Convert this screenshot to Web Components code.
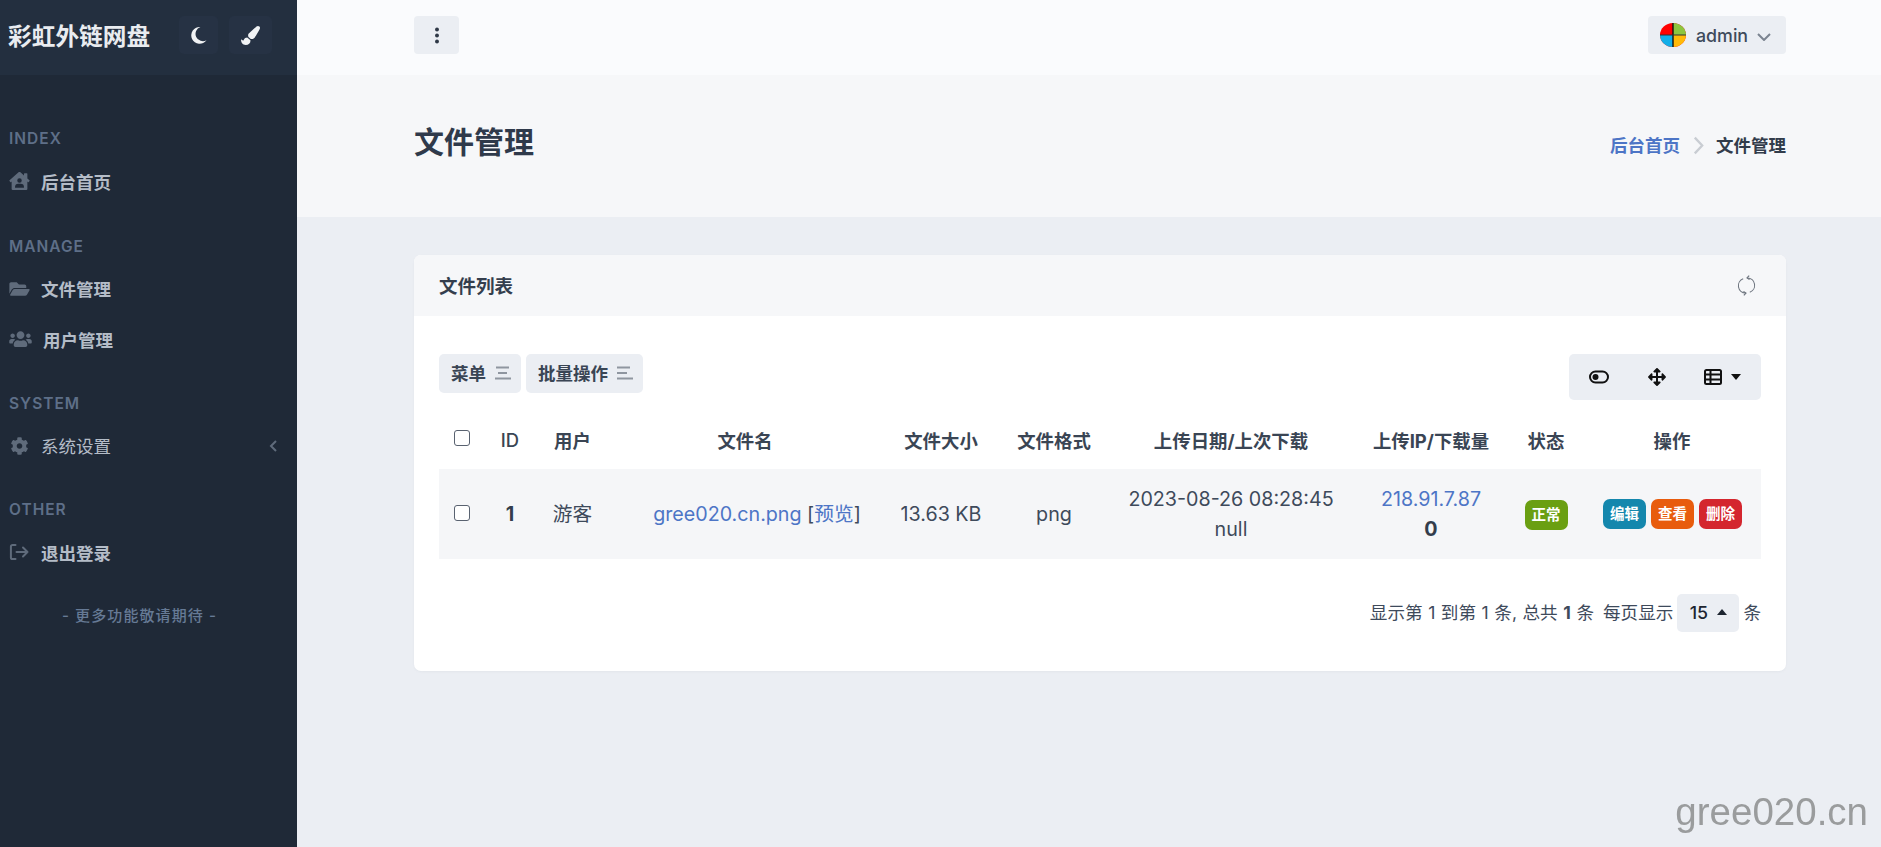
<!DOCTYPE html>
<html lang="zh-CN">
<head>
<meta charset="utf-8">
<title>文件管理</title>
<style>
    html, body { margin: 0; height: 100%; overflow: hidden; }
    body {
        font-family: Inter, "Noto Sans CJK SC", sans-serif;
        font-size: 17.5px;
        color: #3e4a5b;
        background: #ebeef3;
    }
</style>
</head>
<body>
<app-shell>
    <app-sidebar slot="side">
        <nav-section title="INDEX"><nav-item icon="houseUser" bold>后台首页</nav-item></nav-section>
        <nav-section title="MANAGE">
            <nav-item icon="folderOpen" bold>文件管理</nav-item>
            <nav-item icon="users" bold wide>用户管理</nav-item>
        </nav-section>
        <nav-section title="SYSTEM"><nav-item icon="cog" caret>系统设置</nav-item></nav-section>
        <nav-section title="OTHER"><nav-item icon="signOut" bold>退出登录</nav-item></nav-section>
        <div class="more" slot="footer">- 更多功能敬请期待 -</div>
    </app-sidebar>
    <top-bar></top-bar>
    <page-hero heading="文件管理"></page-hero>
    <block-card heading="文件列表">
        <file-toolbar></file-toolbar>
        <file-table></file-table>
        <pager-bar></pager-bar>
    </block-card>
    <water-mark>gree020.cn</water-mark>
</app-shell>

<script>
const ICONS = {
    moon: ['0 0 18 20', '<path fill="currentColor" d="M11 1A8.900 8.900 0 1 0 17.500 15A7.750 7.750 0 1 1 11 1z"/>'],
    brush: ['0 0 512 512', '<path fill="currentColor" d="M167.02 309.34c-40.12 2.58-76.53 17.86-97.19 72.3-2.35 6.21-8 9.98-14.59 9.98-11.11 0-45.46-27.67-55.25-34.35C0 439.62 37.93 512 128 512c75.86 0 128-43.77 128-120.19 0-3.11-.65-6.08-.97-9.13l-88.01-73.34zM457.89 0c-15.16 0-29.37 6.71-40.21 16.45C213.27 199.05 192 203.34 192 257.09c0 13.7 3.25 26.76 8.73 38.7l63.82 53.18c7.21 1.8 14.64 3.03 22.39 3.03 62.11 0 98.11-45.47 211.16-256.46 7.38-14.35 13.9-29.85 13.9-45.99C512 20.64 486 0 457.89 0z"/>'],
    houseUser: ['0 0 576 512', '<path fill="currentColor" d="M570.69 236.27 512 184.44V48a16 16 0 0 0-16-16h-64a16 16 0 0 0-16 16v51.67L314.78 10.3C308.5 4.61 296.53 0 288 0s-20.46 4.61-26.74 10.3l-256 226A18.27 18.27 0 0 0 0 248.2a18.64 18.64 0 0 0 4.09 10.71L25.5 282.7a21.14 21.14 0 0 0 12 5.3 21.67 21.67 0 0 0 10.69-4.11l15.9-14V480a32 32 0 0 0 32 32H480a32 32 0 0 0 32-32V269.88l15.91 14A21.94 21.94 0 0 0 538.63 288a20.89 20.89 0 0 0 11.87-5.31l21.41-23.81A21.64 21.64 0 0 0 576 248.19a21 21 0 0 0-5.31-11.92zM288 176a64 64 0 1 1-64 64 64 64 0 0 1 64-64zm112 272H176a16 16 0 0 1-16-16 96 96 0 0 1 96-96h64a96 96 0 0 1 96 96 16 16 0 0 1-16 16z"/>'],
    folderOpen: ['0 0 576 512', '<path fill="currentColor" d="M572.694 292.093L500.27 416.248A63.997 63.997 0 0 1 444.989 448H45.025c-18.523 0-30.064-20.093-20.731-36.093l72.424-124.155A64 64 0 0 1 152 256h399.964c18.523 0 30.064 20.093 20.73 36.093zM152 224h328v-48c0-26.51-21.49-48-48-48H272l-64-64H48C21.49 64 0 85.49 0 112v278.046l69.077-118.418C86.214 242.25 117.989 224 152 224z"/>'],
    users: ['0 0 640 512', '<path fill="currentColor" d="M96 224c35.3 0 64-28.7 64-64s-28.7-64-64-64-64 28.7-64 64 28.7 64 64 64zm448 0c35.3 0 64-28.7 64-64s-28.7-64-64-64-64 28.7-64 64 28.7 64 64 64zm32 32h-64c-17.6 0-33.5 7.1-45.1 18.6 40.3 22.1 68.9 62 75.1 109.4h66c17.7 0 32-14.3 32-32v-32c0-35.3-28.7-64-64-64zm-256 0c61.9 0 112-50.1 112-112S381.9 32 320 32 208 82.1 208 144s50.1 112 112 112zm76.8 32h-8.3c-20.8 10-43.9 16-68.5 16s-47.6-6-68.5-16h-8.3C179.6 288 128 339.6 128 403.2V432c0 26.5 21.5 48 48 48h288c26.5 0 48-21.5 48-48v-28.8c0-63.6-51.6-115.2-115.2-115.2zm-223.7-13.4C161.5 263.1 145.6 256 128 256H64c-35.3 0-64 28.7-64 64v32c0 17.7 14.3 32 32 32h65.9c6.3-47.4 34.9-87.3 75.2-109.4z"/>'],
    cog: ['0 0 512 512', '<path fill="currentColor" d="M487.4 315.7l-42.6-24.6c4.3-23.2 4.3-47 0-70.2l42.6-24.6c4.9-2.8 7.1-8.6 5.5-14-11.1-35.6-30-67.8-54.7-94.6-3.8-4.1-10-5.1-14.8-2.3L380.8 110c-17.9-15.4-38.5-27.3-60.8-35.1V25.8c0-5.6-3.9-10.5-9.4-11.7-36.7-8.2-74.3-7.8-109.2 0-5.5 1.2-9.4 6.1-9.4 11.7V75c-22.2 7.9-42.8 19.8-60.8 35.1L88.7 85.5c-4.9-2.8-11-1.9-14.8 2.3-24.7 26.7-43.6 58.9-54.7 94.6-1.7 5.4.6 11.2 5.5 14L67.3 221c-4.3 23.2-4.3 47 0 70.2l-42.6 24.6c-4.9 2.8-7.1 8.6-5.5 14 11.1 35.6 30 67.8 54.7 94.6 3.8 4.1 10 5.1 14.8 2.3l42.6-24.6c17.9 15.4 38.5 27.3 60.8 35.1v49.2c0 5.6 3.9 10.5 9.4 11.7 36.7 8.2 74.3 7.8 109.2 0 5.5-1.2 9.4-6.1 9.4-11.7v-49.2c22.2-7.9 42.8-19.8 60.8-35.1l42.6 24.6c4.9 2.8 11 1.9 14.8-2.3 24.7-26.7 43.6-58.9 54.7-94.6 1.5-5.5-.7-11.3-5.6-14.1zM256 336c-44.1 0-80-35.9-80-80s35.9-80 80-80 80 35.9 80 80-35.9 80-80 80z"/>'],
    signOut: ['0 0 20 18', '<path fill="none" stroke="currentColor" stroke-width="2" stroke-linecap="round" stroke-linejoin="round" d="M6 2H3a1.6 1.6 0 0 0-1.6 1.6v10.8A1.6 1.6 0 0 0 3 16h3M7 9h11M13.5 4.5 18 9l-4.500 4.500"/>'],
    ellipsis: ['0 0 6 20', '<circle cx="3" cy="3" r="2.300" fill="currentColor"/><circle cx="3" cy="10" r="2.300" fill="currentColor"/><circle cx="3" cy="17" r="2.300" fill="currentColor"/>'],
    toggle: ['0 0 20 14', '<rect x="1" y="1.500" width="18" height="11" rx="5.500" fill="none" stroke="currentColor" stroke-width="2"/><circle cx="6.500" cy="7" r="3" fill="currentColor"/>'],
    arrows: ['0 0 512 512', '<path fill="currentColor" d="M352.201 425.775l-79.196 79.196c-9.373 9.373-24.568 9.373-33.941 0l-79.196-79.196c-15.119-15.119-4.411-40.971 16.971-40.97h51.162L228 284H127.196v51.162c0 21.382-25.851 32.09-40.971 16.971L7.029 272.937c-9.373-9.373-9.373-24.569 0-33.941L86.225 159.8c15.119-15.119 40.971-4.411 40.971 16.971V228H228V127.196h-51.23c-21.382 0-32.09-25.851-16.971-40.971l79.196-79.196c9.373-9.373 24.568-9.373 33.941 0l79.196 79.196c15.119 15.119 4.411 40.971-16.971 40.971h-51.162V228h100.804v-51.162c0-21.382 25.851-32.09 40.97-16.971l79.196 79.196c9.373 9.373 9.373 24.569 0 33.941L425.773 352.2c-15.119 15.119-40.971 4.411-40.97-16.971V284H284v100.804h51.23c21.382 0 32.09 25.851 16.971 40.971z"/>'],
    columns: ['0 0 18 16', '<rect x="1" y="1" width="16" height="14" rx="1.500" fill="none" stroke="currentColor" stroke-width="2"/><path d="M1 5.500h16M1 10.500h16M6.500 1v14" fill="none" stroke="currentColor" stroke-width="2"/>'],
    refresh: ['0 0 20 22', '<path fill="none" stroke="currentColor" stroke-width="1.100" d="M6.500 3.900A7.800 7.800 0 0 0 9 19M13.500 18.100A7.800 7.800 0 0 0 11 3"/><path fill="none" stroke="currentColor" stroke-width="1.300" d="M12.800 .6 10.600 3l2.600 1.800M7.200 21.400 9.400 19l-2.600-1.800"/>'],
    bars: ['0 0 16 14', '<path fill="none" stroke="currentColor" stroke-width="1.800" d="M1 1.500h13M3 7h9M0 12.500h16"/>'],
    barsLeft: ['0 0 16 14', '<path fill="none" stroke="currentColor" stroke-width="1.800" d="M0 1.500h13M0 7h10M0 12.500h16"/>'],
    chevronDown: ['0 0 14 8', '<path fill="none" stroke="currentColor" stroke-width="2" d="M1 1l6 6 6-6"/>'],
    chevronRight: ['0 0 10 18', '<path fill="none" stroke="currentColor" stroke-width="2.200" d="M1.500 1.500l7 7.500-7 7.500"/>'],
    chevronLeft: ['0 0 8 12', '<path fill="none" stroke="currentColor" stroke-width="2" d="M7 1 2 6l5 5"/>'],
    caretDown: ['0 0 10 6', '<path fill="currentColor" d="M0 0h10L5 6z"/>'],
    caretUp: ['0 0 10 6', '<path fill="currentColor" d="M0 6h10L5 0z"/>'],
    avatar: ['0 0 26 24', '<ellipse cx="13" cy="12" rx="13" ry="12" fill="#f00"/><path fill="#8cc63f" d="M13 0A13 12 0 0 1 26 12H13z"/><path fill="#12aee8" d="M0 12h13v12A13 12 0 0 1 0 12z"/><path fill="#ffba08" d="M13 12h13a13 12 0 0 1-13 12z"/><path stroke="#111" stroke-width="1.400" d="M13 0v24"/><path stroke="#333" stroke-width="1" d="M0 12h26"/>']
};

function define(name, css, html, setup) {
    customElements.define(name, class extends HTMLElement {
        connectedCallback() {
            if (this.shadowRoot) return;
            this.attachShadow({ mode: 'open' });
            const body = typeof html === 'function' ? html(this) : html;
            this.shadowRoot.innerHTML = `<style>${css}</style>${body}`;
            if (setup) setup(this);
        }
    });
}

define('app-icon', `
    :host { display: inline-flex; align-items: center; justify-content: center; line-height: 0; }
    svg { display: block; width: 100%; height: 100%; }
`, el => {
    const icon = ICONS[el.getAttribute('name')];
    return `<svg viewBox="${icon[0]}" xmlns="http://www.w3.org/2000/svg">${icon[1]}</svg>`;
});

define('app-shell', `
    :host { display: grid; grid-template-columns: 297px 1fr; min-height: 100vh; }
    .main { display: flex; flex-direction: column; min-width: 0; }
`, `<slot name="side"></slot><div class="main"><slot></slot></div>`);

define('app-sidebar', `
    :host { display: block; background: #1f2937; color: #fff; min-height: 100vh; }
    .head { height: 75px; background: #232f3f; display: flex; align-items: center; padding: 0 0 5px 8px; box-sizing: border-box; }
    .brand { font-size: 23.700px; font-weight: 700; color: #e9ecf0; width: 171px; white-space: nowrap; }
    .tool { width: 39px; height: 38px; border-radius: 5px; background: #263244; color: #f1f3f5; display: flex; align-items: center; justify-content: center; }
    .tool + .tool { margin-left: 11px; width: 43px; }
    .moon { width: 17px; height: 19px; }
    .brush { width: 21px; height: 19px; }
    nav { display: flex; flex-direction: column; padding-top: 44px; }
    .foot { text-align: center; margin-top: 26px; font-size: 15px; letter-spacing: 1.100px; color: #667a95; padding-right: 18px; line-height: 22px; font-weight: 500; }
`, `
    <div class="head">
        <div class="brand">彩虹外链网盘</div>
        <div class="tool"><app-icon class="moon" name="moon"></app-icon></div>
        <div class="tool"><app-icon class="brush" name="brush"></app-icon></div>
    </div>
    <nav><slot></slot></nav>
    <div class="foot"><slot name="footer"></slot></div>
`);

define('nav-section', `
    :host { display: block; }
    :host(:not(:first-child)) { margin-top: 18px; }
    :host(:nth-child(2)) { margin-top: 19px; }
    h3 { margin: 0; height: 38px; line-height: 40px; padding-left: 9px; font-size: 15.500px; font-weight: 600; letter-spacing: 1px; color: #5e6f88; }
`, el => `<h3>${el.getAttribute('title')}</h3><slot></slot>`);

define('nav-item', `
    :host { display: flex; align-items: center; height: 50.500px; padding: 0 0 2px 9px; box-sizing: border-box; color: #b4bcc7; font-size: 17.500px; position: relative; }
    :host([bold]) { font-weight: 700; }
    app-icon { width: 21px; height: 18px; color: #5f6b7b; flex: none; margin-right: 11px; }
    :host([wide]) app-icon { width: 23px; margin-right: 11px; }
`, el => `
    <app-icon name="${el.getAttribute('icon')}"></app-icon><slot></slot>
    ${el.hasAttribute('caret') ? '<app-icon name="chevronLeft" style="width:8px;height:12px;margin-right:20px;margin-left:auto"></app-icon>' : ''}
`);

define('top-bar', `
    :host { display: flex; align-items: center; justify-content: space-between; height: 75px; background: #fafbfd; padding: 0 95px 5px 117px; box-sizing: border-box; flex: none; }
    .btn { height: 38px; background: #ebeef3; border-radius: 4px; display: flex; align-items: center; justify-content: center; color: #2f3947; }
    .menu { width: 45px; }
    .menu app-icon { width: 6px; height: 17px; }
    .user { width: 138px; justify-content: flex-start; padding-left: 12px; box-sizing: border-box; font-size: 17.800px; color: #3e4a5b; font-weight: 500; }
    .user .av { width: 26px; height: 24px; margin-right: 10px; }
    .user .ch { width: 14px; height: 8px; margin-left: 9px; margin-top: 3px; color: #7b8490; }
`, `
    <div class="btn menu"><app-icon name="ellipsis"></app-icon></div>
    <div class="btn user"><app-icon class="av" name="avatar"></app-icon>admin<app-icon class="ch" name="chevronDown"></app-icon></div>
`);

define('page-hero', `
    :host { display: flex; align-items: center; justify-content: space-between; height: 142px; background: #f6f7f9; padding: 0 95px 0 117px; box-sizing: border-box; flex: none; }
    h1 { margin: 0 0 9px; font-size: 30px; font-weight: 700; color: #2f3a4b; line-height: 1.2; }
    .crumbs { display: flex; align-items: center; font-size: 17.500px; font-weight: 700; color: #323c4b; margin-bottom: 3px; }
    a { color: #4d75c6; text-decoration: none; }
    app-icon { width: 11px; height: 19px; color: #c9cdd3; margin: 1px 12px 0 13px; }
`, el => `
    <h1>${el.getAttribute('heading')}</h1>
    <div class="crumbs"><a href="#">后台首页</a><app-icon name="chevronRight"></app-icon><span>文件管理</span></div>
`);

define('block-card', `
    :host { display: block; margin: 38px 95px 0 117px; background: #fff; border-radius: 7px; overflow: hidden; box-shadow: 0 1px 2px rgba(214, 219, 226, .4); }
    header { height: 61px; background: #f6f7f9; display: flex; align-items: center; justify-content: space-between; padding: 0 30px 0 25px; }
    h2 { margin: 0 0 2px; font-size: 18.500px; font-weight: 700; color: #343e4d; }
    app-icon { width: 19px; height: 21px; color: #6f7680; }
    .body { padding: 38px 25px 39px; }
`, el => `
    <header><h2>${el.getAttribute('heading')}</h2><app-icon name="refresh"></app-icon></header>
    <div class="body"><slot></slot></div>
`);

define('file-toolbar', `
    :host { display: flex; justify-content: space-between; align-items: flex-start; height: 46px; margin-bottom: 10px; }
    .left { display: flex; gap: 5px; }
    .btn { height: 39px; background: #ebeef3; border-radius: 5px; display: flex; align-items: center; padding: 0 10px 2px 12px; box-sizing: border-box; font-size: 17.500px; font-weight: 700; color: #3a4554; }
    .btn app-icon { width: 16px; height: 14px; margin-left: 9px; color: #8f96a0; }
    .right { width: 192px; height: 46px; background: #ebeef3; border-radius: 5px; display: grid; grid-template-columns: 59px 58px 1fr; align-items: center; justify-items: center; color: #111; }
    .tg { width: 20px; height: 14px; }
    .ar { width: 18px; height: 18px; }
    .cl { display: flex; align-items: center; gap: 9px; margin-left: -3px; }
    .cl app-icon:first-child { width: 18px; height: 16px; }
    .cl app-icon:last-child { width: 10px; height: 6px; margin-top: -1px; }
`, `
    <div class="left">
        <div class="btn">菜单<app-icon name="bars"></app-icon></div>
        <div class="btn">批量操作<app-icon name="barsLeft"></app-icon></div>
    </div>
    <div class="right">
        <app-icon class="tg" name="toggle"></app-icon>
        <app-icon class="ar" name="arrows"></app-icon>
        <div class="cl"><app-icon name="columns"></app-icon><app-icon name="caretDown"></app-icon></div>
    </div>
`);

define('file-table', `
    :host { display: block; }
    table { width: 100%; border-collapse: collapse; table-layout: fixed; font-size: 19.700px; color: #3e4a5b; }
    th { height: 59px; padding: 0; font-size: 18.400px; font-weight: 700; color: #3a4554; text-align: center; }
    th.id { font-weight: 500; }
    th:last-child { padding-right: 3px; box-sizing: border-box; }
    td { height: 90px; padding: 0; background: #f5f6f8; text-align: center; line-height: 30px; font-weight: 400; }
    td.name { padding-left: 24px; }
    a { color: #4d75c6; text-decoration: none; }
    .box { display: block; width: 16px; height: 16px; margin: 0 auto; appearance: none; -webkit-appearance: none; border: 1px solid #596270; border-radius: 3px; background: #fff; box-sizing: border-box; }
    th .box { position: relative; top: -2px; }
    td .box { position: relative; top: -1px; }
    b { font-weight: 700; color: #333d4c; }
    .tag { display: inline-block; width: 43px; height: 30px; line-height: 30px; border-radius: 7px; color: #fff; font-size: 14.500px; font-weight: 700; text-align: center; text-decoration: none; }
    .acts { display: flex; gap: 5px; justify-content: center; padding-right: 2px; }
    .ok { background: #6a9f12; }
    .edit { background: #1487ad; }
    .view { background: #e85c0d; }
    .del { background: #d4262e; }
`, `
    <table>
        <colgroup>
            <col style="width:46px"><col style="width:50px"><col style="width:75px"><col style="width:270px"><col style="width:122px">
            <col style="width:104px"><col style="width:250px"><col style="width:150px"><col style="width:80px"><col>
        </colgroup>
        <thead>
            <tr>
                <th><input class="box" type="checkbox"></th><th class="id">ID</th><th>用户</th><th>文件名</th><th>文件大小</th>
                <th>文件格式</th><th>上传日期/上次下载</th><th>上传IP/下载量</th><th>状态</th><th>操作</th>
            </tr>
        </thead>
        <tbody>
            <tr>
                <td><input class="box" type="checkbox"></td>
                <td><b>1</b></td>
                <td>游客</td>
                <td class="name"><a href="#">gree020.cn.png</a> [<a href="#">预览</a>]</td>
                <td>13.63 KB</td>
                <td>png</td>
                <td>2023-08-26 08:28:45<br>null</td>
                <td><a href="#">218.91.7.87</a><br><b>0</b></td>
                <td><span class="tag ok">正常</span></td>
                <td><div class="acts"><a class="tag edit" href="#">编辑</a><a class="tag view" href="#">查看</a><a class="tag del" href="#">删除</a></div></td>
            </tr>
        </tbody>
    </table>
`);

define('pager-bar', `
    :host { display: flex; justify-content: flex-end; align-items: center; height: 38px; margin-top: 35px; font-size: 17.600px; color: #3e4a5b; white-space: nowrap; }
    b { font-weight: 700; }
    .txt { margin-bottom: 3px; }
    .gap { width: 9px; }
    .size { width: 62px; height: 38px; margin: 0 4px; padding-bottom: 2px; box-sizing: border-box; background: #ebeef3; border-radius: 5px; display: flex; align-items: center; justify-content: center; gap: 9px; color: #1d2530; font-size: 17.800px; font-weight: 500; }
    app-icon { width: 10px; height: 6px; }
`, `
    <span class="txt" style="word-spacing:.6px">显示第 1 到第 1 条, 总共 <b>1</b> 条</span><span class="gap"></span><span class="txt">每页显示</span>
    <span class="size">15<app-icon name="caretUp"></app-icon></span><span class="txt">条</span>
`);

define('water-mark', `
    :host { position: fixed; right: 13px; bottom: 13px; font-family: "Liberation Sans", Arial, sans-serif; font-size: 38.500px; line-height: 44px; color: #9a9c9d; }
`, `<slot></slot>`);
</script>
</body>
</html>
